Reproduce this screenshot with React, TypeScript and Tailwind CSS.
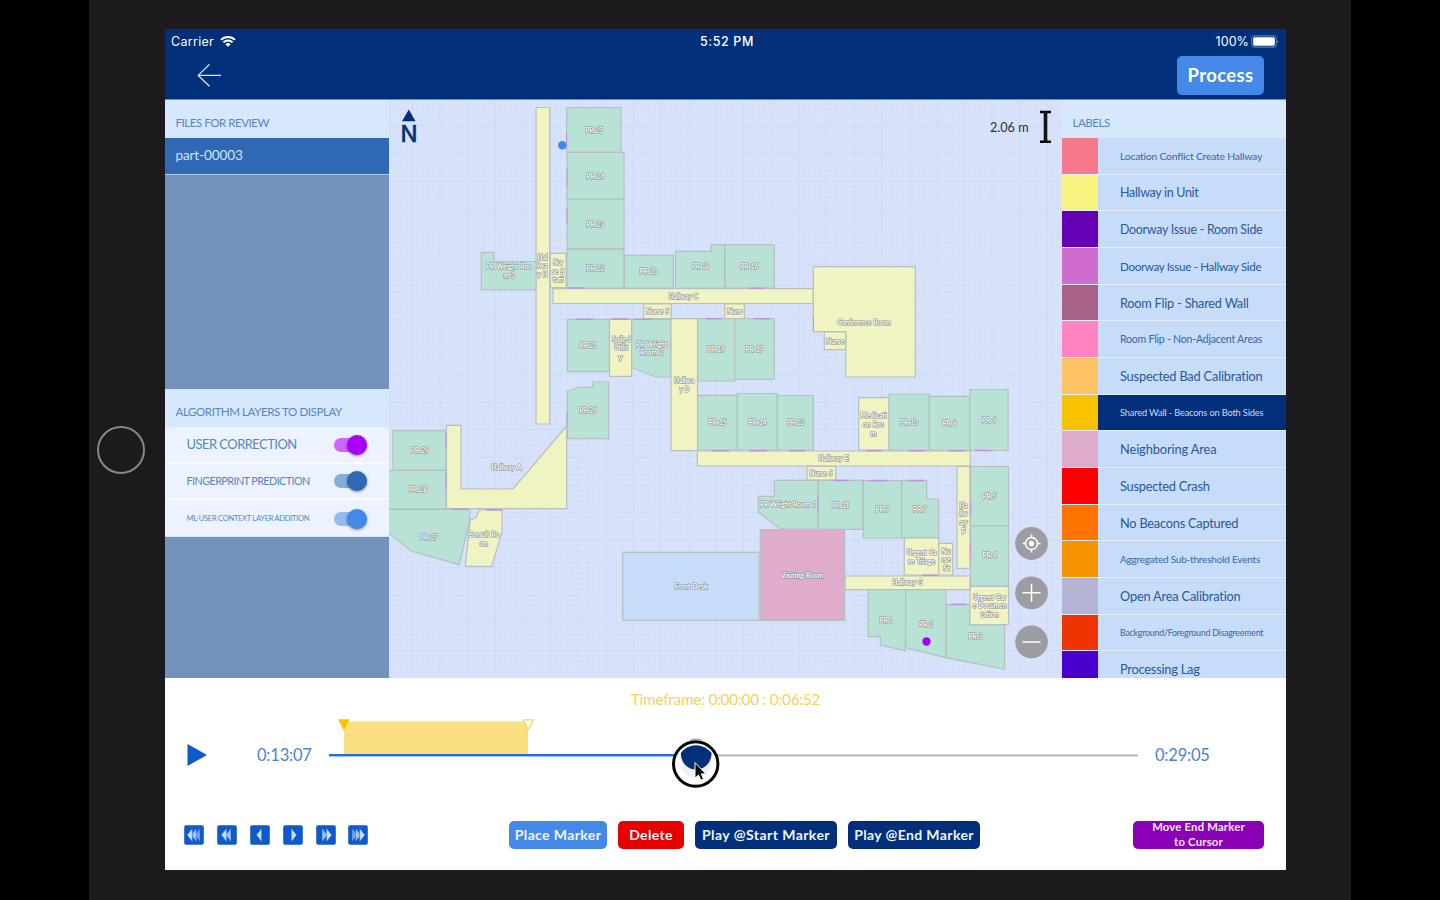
import React from "react";

type Fill = "g" | "y" | "p" | "b";

const fills: Record<Fill, string> = { g: "#b9e2d6", y: "#eff4c2", p: "#dfadcb", b: "#c6ddf9" };

const rooms: [Fill, string][] = [
  ["y", "536,107.5 549.7,107.5 549.7,424 536,424"],
  ["g", "566.7,107.5 621,107.5 621,152.3 566.7,152.3"],
  ["g", "567,152.3 624,152.3 624,199.3 567,199.3"],
  ["g", "567,199.3 624,199.3 624,248.8 567,248.8"],
  ["g", "567,249.3 624,249.3 624,288 567,288"],
  ["g", "624.3,255.3 673.3,255.3 673.3,288 624.3,288"],
  ["g", "675.5,251.3 711.3,251.3 711.3,244.7 724.7,244.7 724.7,288 675.5,288"],
  ["g", "725,244.7 774.3,244.7 774.3,288 725,288"],
  ["g", "481.3,252.3 493.7,252.3 493.7,261.5 536,261.5 536,289.7 481.3,289.7"],
  ["y", "550.3,253.3 566,253.3 566,287.7 550.3,287.7"],
  ["y", "553,288.7 813.3,288.7 813.3,303.5 553,303.5"],
  ["y", "643.7,304 671.3,304 671.3,318.7 643.7,318.7"],
  ["y", "724.7,304 744.3,304 744.3,318.7 724.7,318.7"],
  ["y", "813.3,266.7 915.3,266.7 915.3,377 845.7,377 845.7,331.7 813.3,331.7"],
  ["y", "824.3,332 845.7,332 845.7,349.7 824.3,349.7"],
  ["g", "567.3,319.3 609.3,319.3 609.3,371.7 567.3,371.7"],
  ["y", "609.5,319.3 631.7,319.3 631.7,376.3 609.5,376.3"],
  ["g", "631.7,319.3 670.7,319.3 670.7,377 656,377 631.7,367.3"],
  ["y", "671,318.7 697.5,318.7 697.5,450.7 671,450.7"],
  ["g", "697.7,318.7 734.7,318.7 734.7,381 697.7,381"],
  ["g", "734.7,318.7 774.3,318.7 774.3,379.3 734.7,379.3"],
  ["g", "567.3,391.3 578.3,387.3 592.7,387.3 592.7,382 608.7,382 608.7,438.7 567.3,438.7"],
  ["g", "697.7,395.3 737.3,395.3 737.3,450 697.7,450"],
  ["g", "737.3,393.5 777.3,393.5 777.3,450 737.3,450"],
  ["g", "777.3,395.5 813.3,395.5 813.3,450 777.3,450"],
  ["y", "858.7,397.7 889,397.7 889,450 858.7,450"],
  ["g", "889,394 929.3,394 929.3,450.3 889,450.3"],
  ["g", "929.3,396.3 970,396.3 970,450.3 929.3,450.3"],
  ["g", "970,389.5 1008,389.5 1008,450.5 970,450.5"],
  ["y", "697.3,451 970.3,451 970.3,466 697.3,466"],
  ["y", "807,466.3 835.7,466.3 835.7,480 807,480"],
  ["g", "774.3,480.3 818,480.3 818,529 780.3,529 758.3,512 758.3,496.3 774.3,496.3"],
  ["g", "818.3,480.3 863,480.3 863,529.3 818.3,529.3"],
  ["g", "863.3,480.7 901.5,480.7 901.5,538 863.3,538"],
  ["g", "901.7,480.7 926.7,480.7 926.7,499 938.7,499 938.7,537.7 901.7,537.7"],
  ["y", "957,466.3 970,466.3 970,568.3 957,568.3"],
  ["g", "970.5,466.5 1008.5,466.5 1008.5,525.5 970.5,525.5"],
  ["g", "970.5,526 1008.5,526 1008.5,586 970.5,586"],
  ["g", "946.3,604.7 970,604.7 970,624.7 1004.7,624.7 1004.7,669.3 946.3,657.7"],
  ["y", "970,586.5 1008.5,586.5 1008.5,624.7 970,624.7"],
  ["y", "904.3,538 938.7,538 938.7,575 904.3,575"],
  ["y", "938.8,543.3 952.7,543.3 952.7,575 938.8,575"],
  ["y", "845,576 970,576 970,589.7 845,589.7"],
  ["g", "868,589.7 905.7,589.7 905.3,650.7 880.3,645 880.3,636.7 868,636.7"],
  ["g", "905.7,589.7 946,589.7 946,657.7 905.7,647.7"],
  ["p", "760.3,529.5 844.7,529.5 844.7,620.3 760.3,620.3"],
  ["b", "622.7,552.3 759,552.3 759,620.3 622.7,620.3"],
  ["g", "393,430.7 446,430.7 446,470.3 393,470.3"],
  ["g", "388,470.3 446,470.3 446,509 388,509"],
  ["g", "388,509.3 469.7,509.3 469.7,520 459.3,564.7 411,551 388,532.5"],
  ["y", "446.5,425.3 461,425.3 461,489 513,489 566.7,426 566.7,508.7 446.5,508.7"],
  ["y", "479,510 502,510 502,531.7 491.7,566.3 465.3,566.3 470.3,520 476.3,517.3"],
];

const doors: [number, number, number, number][] = [
  [566.5, 133, 566.5, 149], [567, 169, 567, 186], [567, 208, 567, 224],
  [568, 288, 584, 288], [749, 288.3, 765, 288.3],
  [576, 319.3, 593, 319.3], [611, 319, 628, 319], [634, 319.3, 651, 319.3],
  [706, 318.7, 722, 318.7], [754, 318.7, 770, 318.7],
  [813.5, 316, 813.5, 331], [712, 450.7, 729, 450.7], [750, 450.7, 767, 450.7],
  [789, 450.7, 805, 450.7], [866, 450.7, 882, 450.7], [909, 450.7, 925, 450.7],
  [949, 450.7, 965, 450.7], [975, 450.5, 991, 450.5],
  [818, 497, 818, 512], [834, 480.5, 849, 480.5], [870, 480.5, 887, 480.5],
  [908, 480.5, 924, 480.5], [970.8, 500, 970.8, 515], [970.5, 542, 970.5, 557],
  [922, 575.3, 938, 575.3], [951, 604.3, 967, 604.3],
  [446, 432, 446, 447], [446, 473, 446, 489], [452, 509.3, 468, 509.3],
  [486, 510, 502, 510], [567, 413, 567, 425],
];

const names: [string, number, number, number][] = [
  ["PR 25", 594, 130.5, 17], ["PR 24", 595.3, 176, 18], ["PR 23", 595.3, 224, 18],
  ["PR 22", 595.3, 268.3, 18], ["PR 20", 648.5, 271.5, 18], ["PR 18", 700.5, 266.5, 17],
  ["PR 16", 749.3, 266.5, 18], ["PR Weight Roo", 509, 266.5, 46], ["m 3", 509, 275.3, 11],
  ["Hal", 542.5, 257, 10], ["lwa", 542.5, 265.5, 10], ["y H", 542.5, 274.5, 10],
  ["Nur", 558, 262, 10], ["se S", 558, 271, 12], ["tati", 558, 279.5, 11],
  ["Hallway C", 683.3, 296, 29], ["Nurse S", 657.5, 311.5, 23], ["Nurs", 734.5, 311.3, 15],
  ["Conference Room", 864, 322, 53], ["Nurse", 835, 341.3, 18],
  ["PR 21", 588, 345.5, 17], ["Soiled", 621, 339, 18], ["Utilit", 621, 347.7, 14], ["y", 620.5, 357.5, 4],
  ["PR Weight", 651.5, 344, 31], ["Room 2", 651.5, 352.3, 23],
  ["Hallwa", 684, 380, 20], ["y D", 684.5, 389, 10], ["PR 19", 716, 349.7, 18], ["PR 17", 754.5, 349, 18],
  ["PR 26", 588, 410.3, 17], ["PR 15", 717.5, 422.5, 18], ["PR 14", 757.5, 422, 18], ["PR 12", 795.5, 422.7, 17],
  ["Medicati", 873.5, 415.5, 26], ["on Roo", 873.5, 424.3, 21], ["m", 873.5, 433, 6],
  ["PR 10", 909, 422, 18], ["PR 8", 949.5, 423, 14], ["PR 6", 989, 420, 14],
  ["Hallway E", 833.5, 458.7, 30], ["Nurse S", 821, 473.5, 23], ["PR Weight Room 1", 788, 504.5, 56],
  ["PR 11", 840.5, 505, 17], ["PR 9", 882.5, 509, 14], ["PR 7", 920, 509, 14],
  ["Ha", 963.5, 505, 8], ["llw", 963.5, 513.5, 8], ["ay", 963.5, 522.5, 8], ["F", 963.5, 531, 4],
  ["PR 5", 989.5, 496, 14], ["PR 4", 989.5, 555.7, 14],
  ["Urgent Ca", 921.5, 552.5, 30], ["re Triage", 921.5, 561.3, 27],
  ["Nu", 946, 551, 9], ["rse", 946, 559.5, 9], ["St", 946.5, 568, 7],
  ["Hallway G", 907.5, 582.7, 30], ["Urgent Car", 989.5, 597, 33], ["e Documen", 989.5, 605.7, 34], ["tation", 989.5, 614.5, 18],
  ["PR 1", 886, 620, 13], ["PR 2", 926, 624, 14], ["PR 3", 975.5, 636.7, 14],
  ["Visiting Room", 802.3, 575, 42], ["Front Desk", 691, 586, 33],
  ["PR 29", 420, 450.5, 18], ["PR 28", 418, 489.5, 18], ["PR 27", 429, 537, 18],
  ["Hallway A", 506.5, 467, 30], ["Consult Ro", 483.5, 534, 31], ["om", 483.5, 543, 8],
];

const labels: [string, string, string][] = [
  ["#f7788b", "Location Conflict Create Hallway", "text-[10.4px] tracking-[-0.22px] text-[#3767a5]"],
  ["#f7f480", "Hallway in Unit", "text-[12.5px] tracking-[-0.32px] text-[#28599a]"],
  ["#6600b4", "Doorway Issue - Room Side", "text-[12.4px] tracking-[-0.27px] text-[#28599a]"],
  ["#d06ccf", "Doorway Issue - Hallway Side", "text-[11.6px] tracking-[-0.32px] text-[#28599a]"],
  ["#a86288", "Room Flip - Shared Wall", "text-[12.7px] tracking-[-0.2px] text-[#28599a]"],
  ["#ff84c0", "Room Flip - Non-Adjacent Areas", "text-[10.6px] tracking-[-0.24px] text-[#3767a5]"],
  ["#ffc364", "Suspected Bad Calibration", "text-[12.8px] tracking-[-0.19px] text-[#28599a]"],
  ["#f7c300", "Shared Wall - Beacons on Both Sides", "text-[9.3px] tracking-[-0.18px] text-[#c7dcf9]"],
  ["#dcacca", "Neighboring Area", "text-[12.8px] tracking-[-0.1px] text-[#28599a]"],
  ["#ff0000", "Suspected Crash", "text-[12.8px] tracking-[-0.25px] text-[#28599a]"],
  ["#ff7300", "No Beacons Captured", "text-[12.8px] tracking-[-0.24px] text-[#28599a]"],
  ["#f79300", "Aggregated Sub-threshold Events", "text-[10.1px] tracking-[-0.25px] text-[#3767a5]"],
  ["#b4b5d4", "Open Area Calibration", "text-[12.8px] tracking-[-0.19px] text-[#28599a]"],
  ["#ee3400", "Background/Foreground Disagreement", "text-[8.9px] tracking-[-0.25px] text-[#3767a5]"],
  ["#4a00cf", "Processing Lag", "text-[12.8px] tracking-[-0.22px] text-[#28599a]"],
];

function FloorMap() {
  return (
    <svg className="block h-[578px] w-[673px]" viewBox="389 100 673 578">
      <defs>
        <pattern id="minor" x="389" y="98" width="5.52" height="5.52" patternUnits="userSpaceOnUse">
          <path d="M0 0H5.52M0 0V5.52" stroke="#cbdefb" strokeWidth="1" fill="none" />
        </pattern>
        <pattern id="major" x="384.5" y="98" width="27.6" height="27.6" patternUnits="userSpaceOnUse">
          <path d="M0 0H27.6M0 0V27.6" stroke="#bfd7f8" strokeWidth="1.4" fill="none" />
        </pattern>
      </defs>
      <rect x="389" y="100" width="673" height="578" fill="#d8e2fa" />
      <rect x="389" y="100" width="673" height="578" fill="url(#minor)" opacity="0.75" />
      <rect x="389" y="100" width="673" height="578" fill="url(#major)" opacity="0.6" />
      {rooms.map(([f, pts], i) => (
        <polygon key={i} points={pts} fill={fills[f]} stroke="#b9bec0" strokeWidth="1.2" />
      ))}
      {doors.map(([x1, y1, x2, y2], i) => (
        <line key={i} x1={x1} y1={y1} x2={x2} y2={y2} stroke="#c58fdf" strokeWidth={x1 === x2 ? 1 : 1.5} />
      ))}
      <g fontFamily="Lato, sans-serif" fontSize="6.8" fontWeight="700" fill="#fff" stroke="#858b8b" strokeWidth="1.2" paintOrder="stroke" textAnchor="middle" wordSpacing="0.8">
        {names.map(([t, x, y, w], i) => (
          <text key={i} x={x} y={y + 2.6} textLength={w} lengthAdjust="spacingAndGlyphs">{t}</text>
        ))}
      </g>
      <circle cx="562.3" cy="145.3" r="4.2" fill="#4489e8" />
      <circle cx="926.5" cy="641.5" r="4.2" fill="#a300f5" />
      <path d="M408.8 109.5L415.5 121.3H402Z" fill="#022f79" />
      <text x="408.9" y="141.5" fontFamily="Inter, sans-serif" fontSize="22.5" fontWeight="500" fill="#022f79" textAnchor="middle" stroke="#022f79" strokeWidth="0.3">N</text>
      <text x="990" y="131.5" fontFamily="Lato, sans-serif" fontSize="14" fill="#2a2e36" textLength="38.5" lengthAdjust="spacingAndGlyphs">2.06 m</text>
      <path d="M1040 112H1051M1040 141.7H1051" stroke="#000" strokeWidth="2.6" />
      <path d="M1045.5 111V143" stroke="#111318" strokeWidth="3.6" />
      <g fill="#9c9da2">
        <circle cx="1031.5" cy="543.5" r="16.4" />
        <circle cx="1031.5" cy="592.8" r="16.4" />
        <circle cx="1031.5" cy="642" r="16.4" />
      </g>
      <g stroke="#fff" fill="none" strokeWidth="1.5">
        <circle cx="1031.5" cy="543.5" r="6" />
        <circle cx="1031.5" cy="543.5" r="2.7" fill="#fff" stroke="none" />
        <path d="M1031.5 534.5v3.5M1031.5 549v3.5M1022.5 543.5h3.5M1037 543.5h3.5" />
        <path d="M1022.5 592.8h18M1031.5 583.8v18M1022.5 642h18" />
      </g>
    </svg>
  );
}

function Toggle({ label, text, track, knob, last }: { label: string; text: string; track: string; knob: string; last?: boolean }) {
  return (
    <div className={`flex h-[36.67px] items-center justify-between pt-px pr-[22px] pl-[21.5px] ${last ? "border-b border-[#d5e5fa]" : "border-b-2 border-[#f7faff]"}`}>
      <span className={`whitespace-nowrap text-[#5486c6] ${text}`}>{label}</span>
      <span className={`flex h-[14px] w-[33px] shrink-0 items-center justify-end rounded-full ${track}`}>
        <span className={`h-5 w-5 shrink-0 rounded-full shadow-[0_1px_3px_rgba(0,0,0,0.45)] ${knob}`} />
      </span>
    </div>
  );
}

function SkipIcon({ n, flip }: { n: number; flip?: boolean }) {
  const xs = n === 3 ? [3, 7, 10.6] : n === 2 ? [4.2, 8.6] : [6.3];
  return (
    <svg className="block h-5 w-5" viewBox="0 0 20 20">
      <rect width="19.6" height="19.6" x="0.2" y="0.2" rx="1.8" fill="#0f59c8" />
      <g transform={flip ? "translate(20 0) scale(-1 1)" : undefined}>
        {xs.map((x, i) => (
          <path key={i} d={`M${x} 10L${x + 5.4} 3.3V16.7Z`} fill="#c7dcfa" stroke="#0f59c8" strokeWidth="0.4" opacity={1 - i * 0.22} />
        )).reverse()}
      </g>
    </svg>
  );
}

function Header() {
  return (
    <header className="flex h-[71px] flex-col border-b border-[#6c8fc6] bg-[#022f79] text-white">
      <div className="grid h-[25px] grid-cols-3 items-center pt-px pr-[7px] pl-[6px] font-['Inter','Liberation_Sans',sans-serif] text-[12.5px]">
        <div className="flex items-center gap-[6px] tracking-[0.3px]">
          <span>Carrier</span>
          <svg className="mb-px h-[11px] w-4" viewBox="0 0 16 11">
            <path d="M1 3.9A10 10 0 0 1 15 3.9M3.4 6.4A6.6 6.6 0 0 1 12.6 6.4" fill="none" stroke="#fff" strokeWidth="2" />
            <path d="M8 10.8L5.4 8.2A3.8 3.8 0 0 1 10.6 8.2Z" fill="#fff" />
          </svg>
        </div>
        <div className="pl-[4px] text-center font-medium tracking-[0.6px]">5:52 PM</div>
        <div className="flex items-center justify-end gap-[2px]">
          <span className="tracking-[0.1px]">100%</span>
          <svg className="mb-[2px] h-[13px] w-[28px]" viewBox="0 0 29 13">
            <rect x="0.7" y="0.7" width="25.5" height="11.6" rx="3" fill="none" stroke="#5d7eae" strokeWidth="1.1" />
            <rect x="2.2" y="2.2" width="22.5" height="8.6" rx="1.6" fill="#fff" />
            <path d="M27.4 4.5Q29 6.5 27.4 8.5Z" fill="#8ea6ca" />
          </svg>
        </div>
      </div>
      <div className="flex flex-1 items-center justify-between pr-[22px] pb-[2px] pl-8">
        <svg className="h-6 w-6" viewBox="0 0 24 24" fill="none" stroke="#dbe6f7" strokeWidth="1.3">
          <path d="M12.5 0.4L1.2 11.4L12.5 22.2M1.2 11.4H24" />
        </svg>
        <button className="h-[39px] w-[87px] rounded-[5px] bg-[#4489e8] text-[18.5px] font-bold tracking-[0.35px]">Process</button>
      </div>
    </header>
  );
}

const heading = "flex h-[38px] items-end bg-[#d7e7fc] pb-[7px] pl-[10.5px] text-[11.6px] text-[#5486c6]";

function Files() {
  return (
    <aside className="flex w-56 shrink-0 flex-col bg-[#7292ba]">
      <h2 className={`tracking-[-0.5px] ${heading}`}>FILES FOR REVIEW</h2>
      <div className="flex h-[37px] items-center border-b border-[#b4cbe9] bg-[#2f69b3] pb-px pl-[10.5px] text-[13.6px] tracking-[-0.15px] text-[#d3e3f8]">part-00003</div>
      <div className="h-[214px]" />
      <h2 className={`tracking-[-0.45px] ${heading}`}>ALGORITHM LAYERS TO DISPLAY</h2>
      <div className="bg-[#ecf3fe]">
        <Toggle label="USER CORRECTION" text="text-[13px] tracking-[-0.55px]" track="bg-[#cc66ff]" knob="bg-[#a800ff]" />
        <Toggle label="FINGERPRINT PREDICTION" text="text-[10.8px] tracking-[-0.57px]" track="bg-[#86acd8]" knob="bg-[#2f69b3]" />
        <Toggle label="ML-USER CONTEXT LAYER ADDITION" text="text-[7.5px] tracking-[-0.26px]" track="bg-[#94bbf1]" knob="bg-[#4489e8]" last />
      </div>
    </aside>
  );
}

function Labels() {
  return (
    <aside className="w-56 shrink-0 overflow-hidden bg-[#c7dcf9]">
      <h2 className={`tracking-[-0.5px] ${heading}`}>LABELS</h2>
      {labels.map(([color, name, cls]) => (
        <div key={name} className={`flex h-[36.67px] items-stretch border-b border-[#e3eefc] ${color === "#f7c300" ? "bg-[#022f79]" : ""}`}>
          <div className="w-9" style={{ background: color }} />
          <div className={`flex items-center pt-[1.5px] pl-[22px] whitespace-nowrap ${cls}`}>{name}</div>
        </div>
      ))}
    </aside>
  );
}

function Timeline() {
  return (
    <div className="flex h-[90px] items-center pl-[22px] text-[16.5px] tracking-[-0.2px] text-[#4a82d1]">
      <svg className="h-[22px] w-5" viewBox="0 0 20 22"><path d="M0.5 0L20 11L0.5 22Z" fill="#0f59c8" /></svg>
      <span className="ml-[50px] w-[72px]">0:13:07</span>
      <svg className="h-[90px] w-[809px] overflow-visible" viewBox="329 710 809 90">
        <rect x="344" y="721.5" width="184" height="33" fill="#fbe07f" />
        <path d="M338 719.3H349.7L343.9 730.5Z" fill="#f7c300" />
        <path d="M523 719.8H533.4L528.2 729.6Z" fill="#fff" stroke="#f5d566" strokeWidth="1.2" />
        <rect x="329" y="754" width="366" height="2.4" fill="#1f6fdc" />
        <rect x="695" y="754.4" width="443" height="2" fill="#b5b5b5" />
        <circle cx="695.7" cy="764" r="21.7" fill="#fff" />
        <path d="M690 740.2Q696 738 702 740.2" stroke="#8fa9cf" strokeWidth="1.2" fill="none" />
        <circle cx="696" cy="763" r="15" fill="#dde6f5" opacity="0.6" />
        <path d="M680.8 753Q687 745.3 696 745.3T711.6 753C711.6 763 704 769.6 696 769.6S680.8 763 680.8 753Z" fill="#022f79" />
        <circle cx="695.7" cy="764" r="22.2" fill="none" stroke="#050505" strokeWidth="3" />
        <path d="M695 762.6V778.2L698.5 775L700.9 780.2L703.6 779L701.3 773.9H705.9Z" fill="#050505" stroke="#fff" strokeWidth="1" />
      </svg>
      <span className="ml-[17px]">0:29:05</span>
    </div>
  );
}

function Controls() {
  const btn = "h-7 rounded-[5px] pb-[2px] text-[14px] font-bold whitespace-nowrap text-[#f0f5fd]";
  return (
    <div className="flex h-7 items-center pl-[19px]">
      <div className="flex w-[325px] gap-[12.9px] pb-px">
        <SkipIcon n={3} />
        <SkipIcon n={2} />
        <SkipIcon n={1} />
        <SkipIcon n={1} flip />
        <SkipIcon n={2} flip />
        <SkipIcon n={3} flip />
      </div>
      <div className="flex gap-[11px]">
        <button className={`w-[98px] bg-[#4489e8] tracking-[0.38px] ${btn}`}>Place Marker</button>
        <button className={`w-[66px] bg-[#e60000] tracking-[0.35px] ${btn}`}>Delete</button>
        <button className={`w-[142px] bg-[#022f79] tracking-[0.45px] ${btn}`}>Play @Start Marker</button>
        <button className={`w-[132px] bg-[#022f79] tracking-[0.38px] ${btn}`}>Play @End Marker</button>
      </div>
      <button className="mr-[22px] ml-auto flex h-7 w-[131px] flex-col items-center justify-center rounded-[5px] bg-[#8900b5] pb-px text-[11.3px] leading-[14.5px] font-bold tracking-[0.2px] text-[#f5eafa]">
        <span>Move End Marker</span>
        <span>to Cursor</span>
      </button>
    </div>
  );
}

export default function App() {
  return (
    <div className="flex h-[900px] w-[1440px] justify-center overflow-hidden bg-black font-['Lato','Open_Sans',sans-serif]">
      <div className="flex h-[900px] w-[1262px] bg-[#1c1a1d]">
        <div className="flex w-[76px] items-center justify-center pr-[13px]">
          <div className="h-12 w-12 shrink-0 rounded-full border-2 border-[#88868a]" />
        </div>
        <main className="mt-[29px] flex h-[841px] w-[1121px] flex-col bg-white">
          <Header />
          <div className="flex h-[578px]">
            <Files />
            <div className="w-[673px] shrink-0"><FloorMap /></div>
            <Labels />
          </div>
          <section className="flex flex-1 flex-col">
            <p className="pt-[9px] pb-px text-center text-[15.4px] leading-6 tracking-[-0.27px] text-[#f4d260]">Timeframe: 0:00:00 : 0:06:52</p>
            <div className="-mt-[2px]"><Timeline /></div>
            <div className="mt-[21px]"><Controls /></div>
          </section>
        </main>
      </div>
    </div>
  );
}
